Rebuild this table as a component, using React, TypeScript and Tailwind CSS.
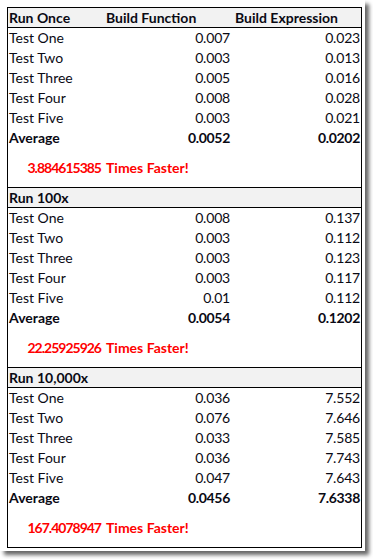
import React from 'react';

type Row = { label: string; fn: string; expr: string };

const sections: { title: string; rows: Row[]; avg: [string, string]; factor: string }[] = [
    {
        title: 'Run Once',
        rows: [
            { label: 'Test One', fn: '0.007', expr: '0.023' },
            { label: 'Test Two', fn: '0.003', expr: '0.013' },
            { label: 'Test Three', fn: '0.005', expr: '0.016' },
            { label: 'Test Four', fn: '0.008', expr: '0.028' },
            { label: 'Test Five', fn: '0.003', expr: '0.021' },
        ],
        avg: ['0.0052', '0.0202'],
        factor: '3.884615385',
    },
    {
        title: 'Run 100x',
        rows: [
            { label: 'Test One', fn: '0.008', expr: '0.137' },
            { label: 'Test Two', fn: '0.003', expr: '0.112' },
            { label: 'Test Three', fn: '0.003', expr: '0.123' },
            { label: 'Test Four', fn: '0.003', expr: '0.117' },
            { label: 'Test Five', fn: '0.01', expr: '0.112' },
        ],
        avg: ['0.0054', '0.1202'],
        factor: '22.25925926',
    },
    {
        title: 'Run 10,000x',
        rows: [
            { label: 'Test One', fn: '0.036', expr: '7.552' },
            { label: 'Test Two', fn: '0.076', expr: '7.646' },
            { label: 'Test Three', fn: '0.033', expr: '7.585' },
            { label: 'Test Four', fn: '0.036', expr: '7.743' },
            { label: 'Test Five', fn: '0.047', expr: '7.643' },
        ],
        avg: ['0.0456', '7.6338'],
        factor: '167.4078947',
    },
];

const cols = 'grid grid-cols-[96px_128px_129px]';

export default function App() {
    return (
        <div className="min-h-[559px] w-[373px] bg-white font-['Lato',sans-serif] text-[14px] leading-none text-[#0a0a14]">
            <div className="h-[551px] w-[365px] bg-white pl-[7px] pt-[7px] shadow-[4px_4px_4px_rgba(0,0,0,0.6)]">
                <div className="w-[355px] border border-black">
                    {sections.map((s, i) => (
                        <div key={s.title} className={i > 0 ? 'border-t border-black' : ''}>
                            {/* header */}
                            <div className={`${cols} h-[20px] items-center border-b border-black bg-[#f2f2f2] font-bold`}>
                                <span className="pl-[1px]">{s.title}</span>
                                <span className="pl-[2px]">{i === 0 ? 'Build Function' : ''}</span>
                                <span className="pl-[3px]">{i === 0 ? 'Build Expression' : ''}</span>
                            </div>

                            {s.rows.map((r) => (
                                <div key={r.label} className={`${cols} h-[20px] items-center`}>
                                    <span className="pl-[1px]">{r.label}</span>
                                    <span className="pr-[2px] text-right tracking-[-0.2px]">{r.fn}</span>
                                    <span className="pr-[1px] text-right tracking-[-0.2px]">{r.expr}</span>
                                </div>
                            ))}

                            <div className={`${cols} h-[20px] items-center font-bold`}>
                                <span className="pl-[1px]">Average</span>
                                <span className="pr-[2px] text-right tracking-[-0.3px]">{s.avg[0]}</span>
                                <span className="pr-[1px] text-right tracking-[-0.3px]">{s.avg[1]}</span>
                            </div>

                            {/* result */}
                            <div className={`${cols} h-[39px] items-center font-bold text-[#ff0000]`}>
                                <span className="whitespace-nowrap pr-[3px] text-right tracking-[-1px]">{s.factor}</span>
                                <span className="pl-[2px]">Times Faster!</span>
                                <span />
                            </div>
                        </div>
                    ))}
                </div>
            </div>
        </div>
    );
}
